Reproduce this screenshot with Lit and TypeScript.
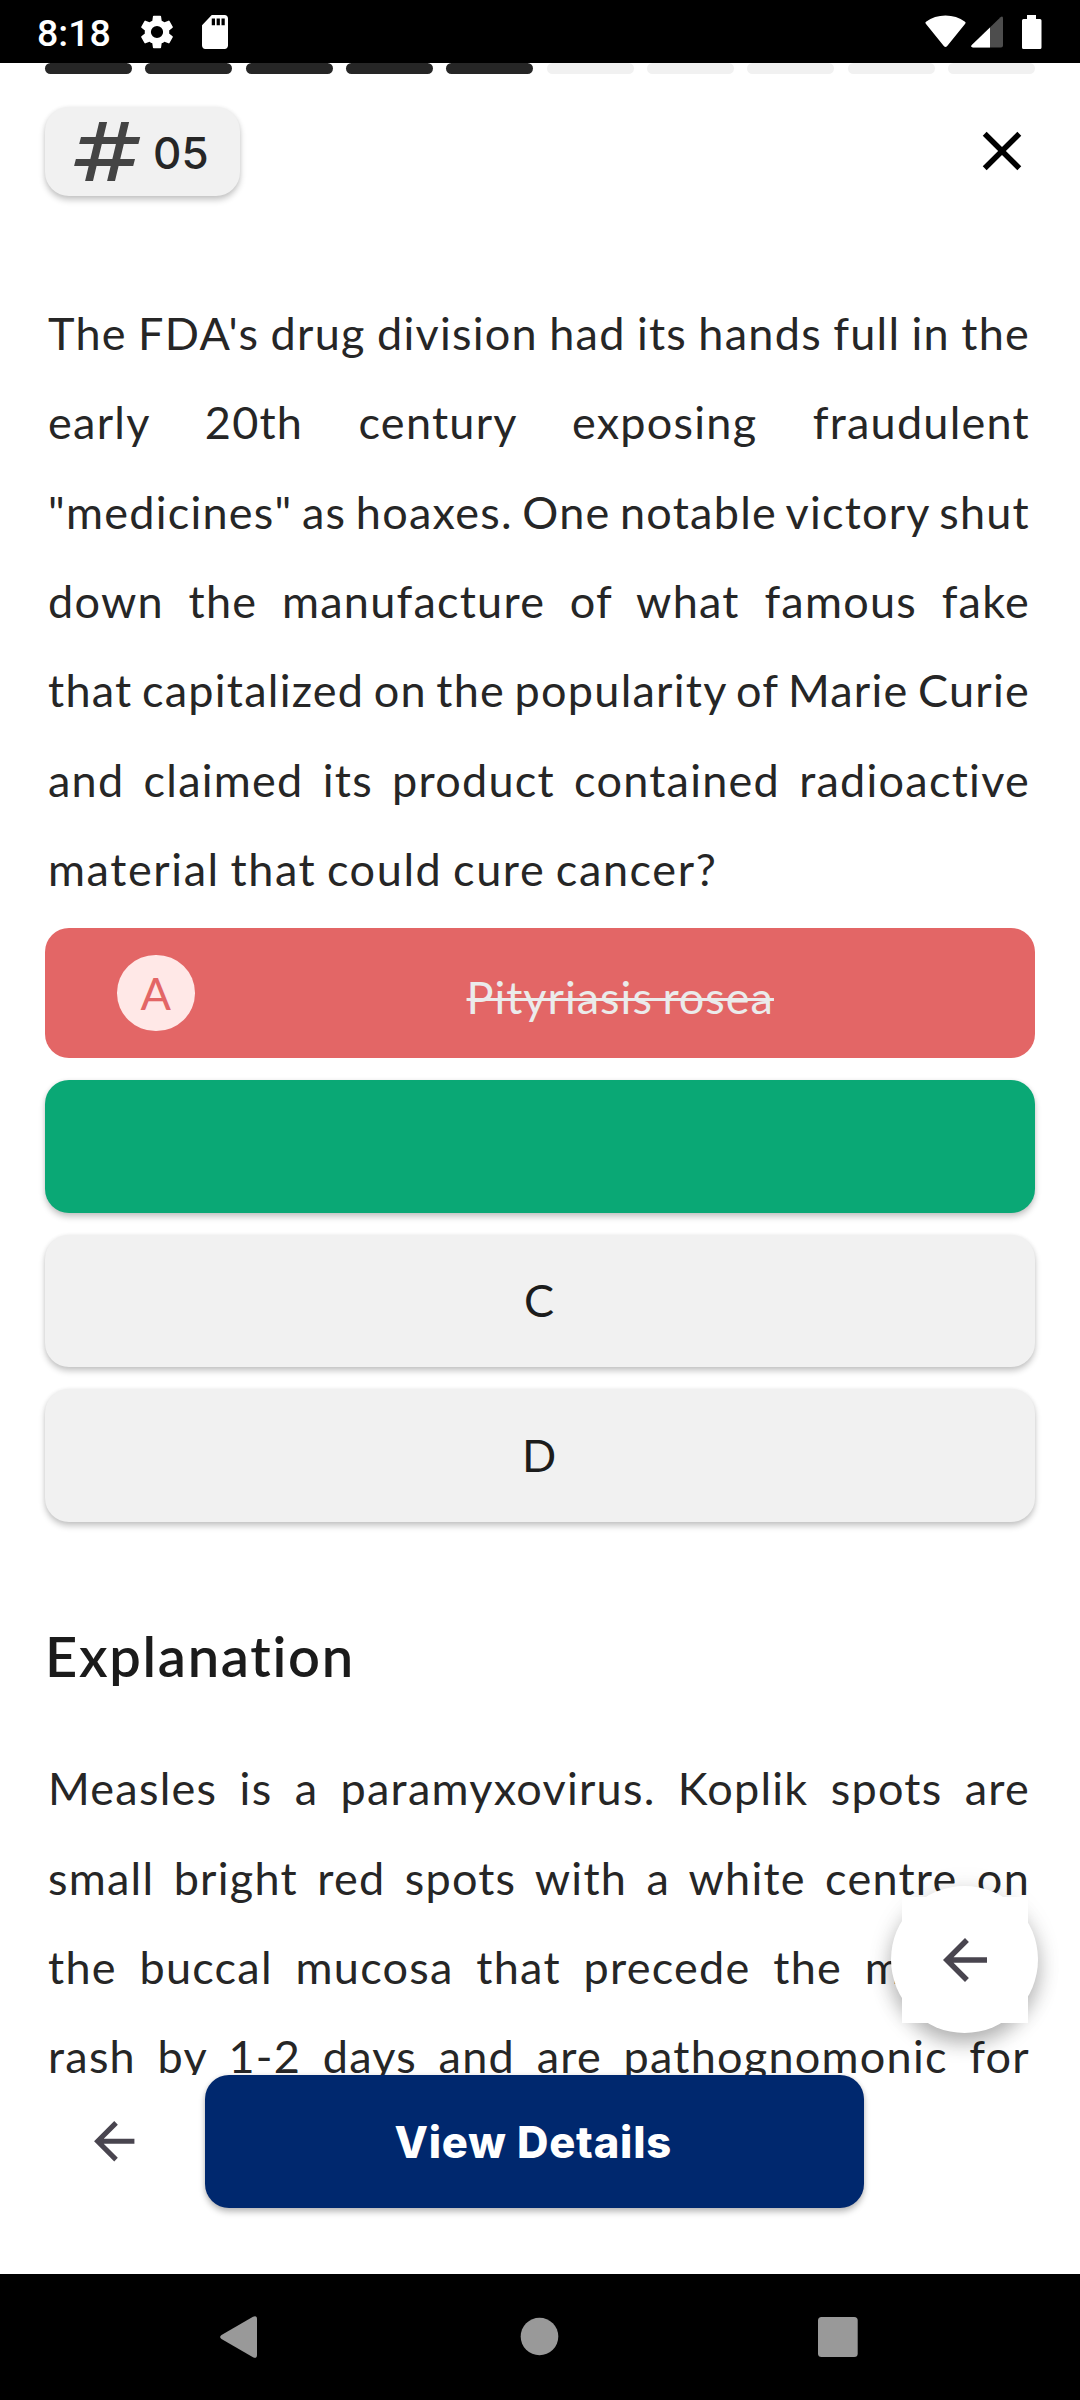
import { LitElement, html, css, svg } from "lit";
import { customElement } from "lit/decorators.js";
import { classMap } from "lit/directives/class-map.js";

const QUESTION = [
  "The FDA's drug division had its hands full in the",
  "early 20th century exposing fraudulent",
  "\"medicines\" as hoaxes. One notable victory shut",
  "down the manufacture of what famous fake",
  "that capitalized on the popularity of Marie Curie",
  "and claimed its product contained radioactive",
  "material that could cure cancer?",
];

const EXPLANATION = [
  "Measles is a paramyxovirus. Koplik spots are",
  "small bright red spots with a white centre on",
  "the buccal mucosa that precede the measles",
  "rash by 1-2 days and are pathognomonic for",
];

const arrowPath = svg`<path d="M20 11H7.83l5.59-5.59L12 4l-8 8 8 8 1.41-1.41L7.83 13H20v-2z"/>`;

@customElement("app-root")
export class AppRoot extends LitElement {
  static styles = css`
    :host { display: block; }
    * { box-sizing: border-box; }
    svg { display: block; }
    .screen {
      width: 1080px; height: 2400px; display: flex; flex-direction: column;
      background: #fff; color: #262626; overflow: hidden;
      font-family: Lato, "Open Sans", sans-serif; font-size: 45px;
    }
    .status {
      height: 63px; flex: none; background: #000; color: #fff; display: flex;
      align-items: center; padding: 0 38px 0 37px;
    }
    .clock { font: 500 37.5px/44px Roboto, sans-serif; width: 103px; padding-top: 3px; }
    .gear { margin-right: 28px; }
    .grow { flex: 1; }
    .wifi { margin-right: 5px; }
    .signal { margin-right: 19px; }
    .content { height: 2012px; flex: none; overflow: hidden; position: relative; padding: 0 45px; }
    .progress { display: flex; gap: 13.3px; }
    .segment { flex: 1; height: 11px; border-radius: 5.5px; background: #f1f1f1; }
    .segment.done { background: #262626; }
    .header { margin-top: 33px; height: 88px; display: flex; justify-content: space-between; align-items: center; }
    .number {
      width: 195px; height: 89px; border-radius: 24px; background: #f1f1f1; display: flex;
      align-items: center; padding-left: 29px; gap: 12px; font: 500 44px/50px Inter, sans-serif;
      box-shadow: 0 4px 6px rgba(0,0,0,.22), 0 0 4px rgba(0,0,0,.06);
    }
    .digits { padding-top: 3px; }
    .paragraph { margin: 0 5px 0 3px; line-height: 89.33px; letter-spacing: 1.25px; word-spacing: -5px; }
    .line { display: block; white-space: nowrap; text-align: justify; text-align-last: justify; }
    .question { margin-top: 94px; }
    .question .line:last-child { text-align-last: left; letter-spacing: 1.6px; word-spacing: -2.5px; }
    .options { margin-top: 13.9px; display: flex; flex-direction: column; gap: 21.8px; }
    .option {
      height: 132.8px; border-radius: 24px; background: #f1f1f1; color: #1c1c1c; display: flex; align-items: center;
      justify-content: center; padding: 0 2px 2px 0;
      box-shadow: 0 4px 6px rgba(0,0,0,.22), 0 0 4px rgba(0,0,0,.06);
    }
    .option.wrong { height: 130px; background: #e36666; box-shadow: none; justify-content: flex-start; padding: 0 0 0 72px; }
    .option.right { background: #0aa875; }
    .letter {
      width: 77.5px; height: 75.5px; border-radius: 50%; background: #ffe8e7; color: #e36666;
      display: flex; align-items: center; justify-content: center;
    }
    .struck { flex: 1; text-align: center; color: #ebebeb; text-decoration: line-through 2.5px; padding: 8px 0 0 11px; letter-spacing: 1px; word-spacing: -3px; }
    .heading { margin: 100.5px 0 0 0; font-size: 56px; line-height: 67px; font-weight: 600; letter-spacing: 1.7px; color: #1b1b1b; }
    .explanation { margin-top: 55px; }
    .fab {
      position: absolute; left: 891px; top: 1823px; width: 147px; height: 147px; border-radius: 50%;
      background: #fff; fill: #49454f; display: flex; align-items: center; justify-content: center;
      box-shadow: 0 10px 20px rgba(0,0,0,.28), 0 2px 28px rgba(0,0,0,.08);
    }
    .plate { width: 126px; height: 126px; background: #fff; display: flex; align-items: center; justify-content: center; }
    .actions { height: 199px; flex: none; display: flex; padding-left: 84px; background: #fff; }
    .back { width: 120.5px; height: 132px; display: flex; align-items: center; fill: #49454f; }
    .details {
      width: 659.5px; height: 132.6px; border-radius: 24px; background: #00286e; color: #fff; display: flex;
      align-items: center; justify-content: center; font: 800 43.5px/52px Inter, sans-serif; letter-spacing: 0.8px;
      padding: 2px 2px 0 0; box-shadow: 0 4px 6px rgba(0,0,0,.26), 0 0 4px rgba(0,0,0,.08);
    }
    .nav { height: 126px; flex: none; background: #000; fill: #999; }
  `;

  private lines(lines: string[]) {
    return lines.map(text => html`<span class="line">${text}</span>`);
  }

  render() {
    return html`
      <div class="screen">
        <div class="status">
          <span class="clock">8:18</span>
          <svg class="gear" width="34" height="34" viewBox="2 2 20 20" fill="#fff"><path d="M19.14 12.94c.04-.3.06-.61.06-.94s-.02-.64-.07-.94l2.03-1.58a.49.49 0 0 0 .12-.61l-1.92-3.32a.49.49 0 0 0-.59-.22l-2.39.96a7.03 7.03 0 0 0-1.62-.94l-.36-2.54a.48.48 0 0 0-.48-.41h-3.84a.48.48 0 0 0-.47.41l-.36 2.54c-.59.24-1.13.57-1.62.94l-2.39-.96a.48.48 0 0 0-.59.22L2.74 8.87a.48.48 0 0 0 .12.61l2.03 1.58c-.05.3-.09.63-.09.94s.02.64.07.94l-2.03 1.58a.49.49 0 0 0-.12.61l1.92 3.32c.12.22.37.29.59.22l2.39-.96c.5.38 1.03.7 1.62.94l.36 2.54c.05.24.24.41.48.41h3.84c.24 0 .44-.17.47-.41l.36-2.54c.59-.24 1.13-.56 1.62-.94l2.39.96c.22.08.47 0 .59-.22l1.92-3.32a.48.48 0 0 0-.12-.61l-2.01-1.58zM12 15.6a3.6 3.6 0 1 1 0-7.2 3.6 3.6 0 0 1 0 7.2z"/></svg>
          <svg width="26" height="34" viewBox="4 2 16 20" preserveAspectRatio="none" fill="#fff"><path d="M18 2h-8L4.02 8 4 20c0 1.100.9 2 2 2h12c1.100 0 2-.9 2-2V4c0-1.100-.9-2-2-2zm-6 6h-2V4h2v4zm3 0h-2V4h2v4zm3 0h-2V4h2v4z"/></svg>
          <span class="grow"></span>
          <svg class="wifi" width="41" height="34" viewBox="0 0 41 34"><path d="M1 9Q-.2 7.700 1 6.800Q9.500 .5 20.500 .5T40 6.800Q41.200 7.700 40 9L22 31.200Q20.500 32.800 19 31.200Z" fill="#fff"/></svg>
          <svg class="signal" width="32" height="34" viewBox="0 0 32 34"><path d="M29.500 2.200Q32 .5 32 3.500V30.500Q32 32.500 30 32.500H2Q-1 32 .8 30Z" fill="#4d4d4d"/><path d="M19 12.500V32.500H2Q-1 32 .8 30Z" fill="#fff"/></svg>
          <svg width="20" height="34" viewBox="0 0 20 34"><path d="M5 0H14V4H18Q19.500 4 19.500 5.500V32.500Q19.500 34 18 34H1.500Q0 34 0 32.500V5.500Q0 4 1.500 4H5Z" fill="#fff"/></svg>
        </div>

        <div class="content">
          <div class="progress">
            ${Array.from({ length: 10 }, (_, i) => html`<span class=${classMap({ segment: true, done: i < 5 })}></span>`)}
          </div>
          <div class="header">
            <div class="number">
              <svg width="67" height="59" viewBox="0 0 67 59" fill="#444"><path d="M25.200 0H33.100L19 59H11.100ZM47.200 0H55.100L41 59H33.100ZM7 15H66.200L64.400 22H5.200ZM1.900 37H61L59.200 44H.1Z"/></svg>
              <span class="digits">05</span>
            </div>
            <svg width="66" height="66" viewBox="0 0 24 24"><path d="M19 6.410L17.590 5 12 10.590 6.410 5 5 6.410 10.590 12 5 17.590 6.410 19 12 13.410 17.590 19 19 17.590 13.410 12z"/></svg>
          </div>
          <div class="paragraph question">${this.lines(QUESTION)}</div>
          <div class="options">
            <div class="option wrong"><span class="letter">A</span><span class="struck">Pityriasis rosea</span></div>
            <div class="option right"></div>
            <div class="option">C</div>
            <div class="option">D</div>
          </div>
          <div class="heading">Explanation</div>
          <div class="paragraph explanation">${this.lines(EXPLANATION)}</div>
          <div class="fab"><div class="plate"><svg width="66" height="66" viewBox="0 0 24 24">${arrowPath}</svg></div></div>
        </div>

        <div class="actions">
          <div class="back"><svg width="60.500" height="60.500" viewBox="0 0 24 24">${arrowPath}</svg></div>
          <div class="details">View Details</div>
        </div>
        <div class="nav">
          <svg width="1080" height="126" viewBox="0 0 1080 126">
            <path d="M221.500 61L253 42.700Q257 41 257 45V81Q257 85 253 83.300L221.500 65Q218.800 63 221.500 61Z"/>
            <circle cx="539.500" cy="62.500" r="18.800"/>
            <rect x="818" y="43" width="39.700" height="40" rx="3.500"/>
          </svg>
        </div>
      </div>`;
  }
}
